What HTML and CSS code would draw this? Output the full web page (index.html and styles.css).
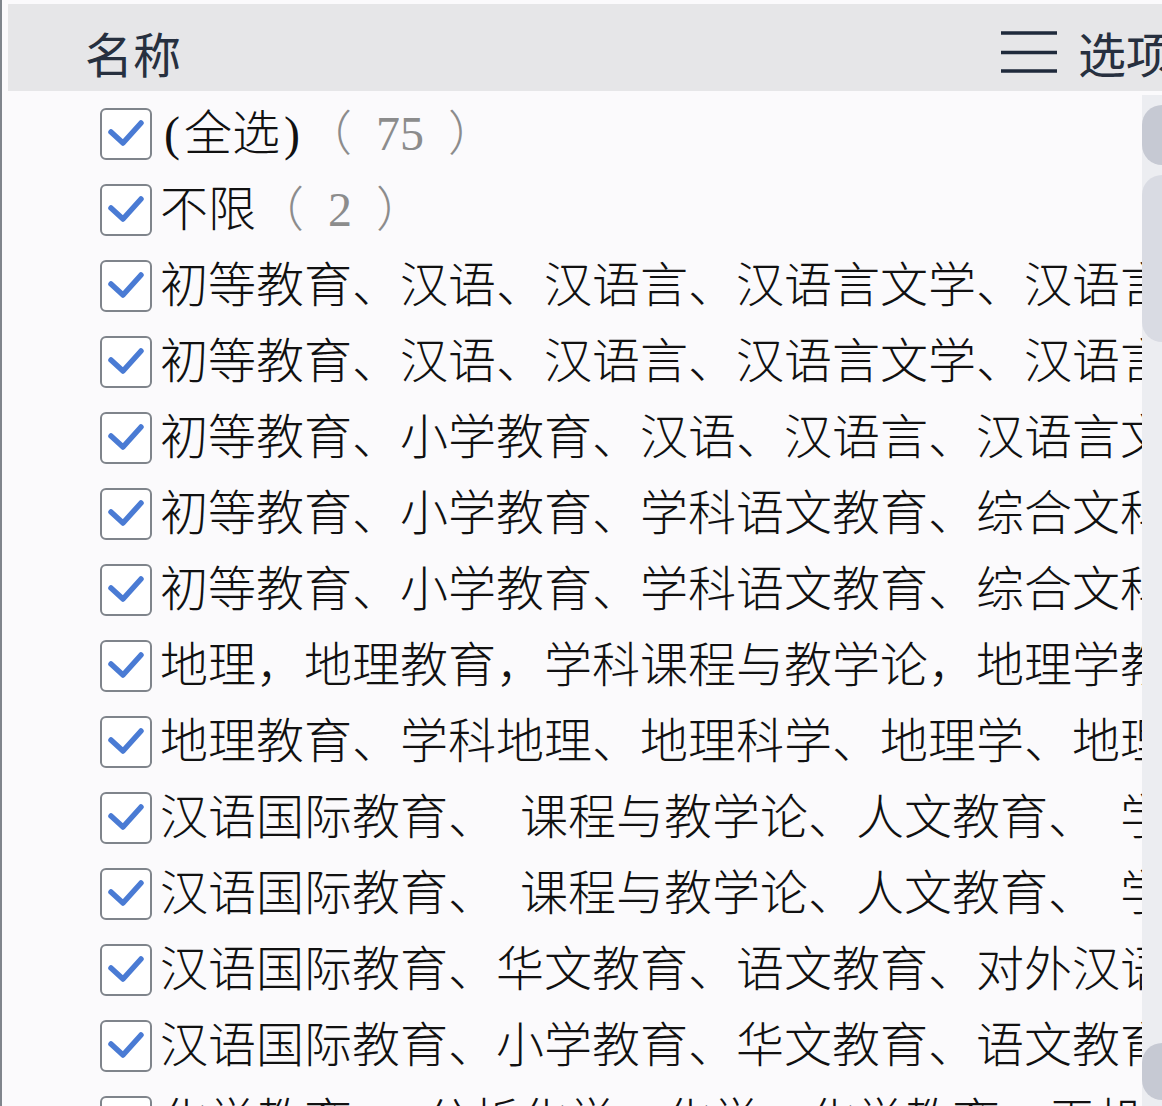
FILE: index.html
```html
<!DOCTYPE html>
<html lang="zh-CN">
<head>
    <meta charset="UTF-8">
    <meta name="viewport" content="width=device-width, initial-scale=1.0">
    <title>筛选 - 名称</title>
    <link rel="stylesheet" href="styles.css">
</head>
<body>
    <div class="filter-panel">
        <div class="panel-head">
            <span class="head-title">名称</span>
            <div class="head-options">
                <svg class="menu-icon" width="56" height="44" viewBox="0 0 56 44">
                    <path d="M0 3H56M0 22.5H56M0 41H56" stroke="#1f2a3b" stroke-width="3.5" fill="none"/>
                </svg>
                <span>选项</span>
            </div>
        </div>

        <div class="panel-body">
            <ul class="item-list">
                <li class="item">
                    <span class="check"><svg width="48" height="48" viewBox="0 0 48 48"><path d="M9 22L21 33L39 13"/></svg></span>
                    <span class="label"><span class="half">(</span>全选<span class="half">)</span><span class="count">（<span class="num">75</span>）</span></span>
                </li>
                <li class="item">
                    <span class="check"><svg width="48" height="48" viewBox="0 0 48 48"><path d="M9 22L21 33L39 13"/></svg></span>
                    <span class="label">不限<span class="count">（<span class="num">2</span>）</span></span>
                </li>
                <li class="item">
                    <span class="check"><svg width="48" height="48" viewBox="0 0 48 48"><path d="M9 22L21 33L39 13"/></svg></span>
                    <span class="label">初等教育、汉语、汉语言、汉语言文学、汉语言文字学</span>
                </li>
                <li class="item">
                    <span class="check"><svg width="48" height="48" viewBox="0 0 48 48"><path d="M9 22L21 33L39 13"/></svg></span>
                    <span class="label">初等教育、汉语、汉语言、汉语言文学、汉语言文学教育</span>
                </li>
                <li class="item">
                    <span class="check"><svg width="48" height="48" viewBox="0 0 48 48"><path d="M9 22L21 33L39 13"/></svg></span>
                    <span class="label">初等教育、小学教育、汉语、汉语言、汉语言文学</span>
                </li>
                <li class="item">
                    <span class="check"><svg width="48" height="48" viewBox="0 0 48 48"><path d="M9 22L21 33L39 13"/></svg></span>
                    <span class="label">初等教育、小学教育、学科语文教育、综合文科教育</span>
                </li>
                <li class="item">
                    <span class="check"><svg width="48" height="48" viewBox="0 0 48 48"><path d="M9 22L21 33L39 13"/></svg></span>
                    <span class="label">初等教育、小学教育、学科语文教育、综合文科</span>
                </li>
                <li class="item">
                    <span class="check"><svg width="48" height="48" viewBox="0 0 48 48"><path d="M9 22L21 33L39 13"/></svg></span>
                    <span class="label">地理，地理教育，学科课程与教学论，地理学教育</span>
                </li>
                <li class="item">
                    <span class="check"><svg width="48" height="48" viewBox="0 0 48 48"><path d="M9 22L21 33L39 13"/></svg></span>
                    <span class="label">地理教育、学科地理、地理科学、地理学、地理信息科学</span>
                </li>
                <li class="item">
                    <span class="check"><svg width="48" height="48" viewBox="0 0 48 48"><path d="M9 22L21 33L39 13"/></svg></span>
                    <span class="label">汉语国际教育、  课程与教学论、人文教育、  学科教学</span>
                </li>
                <li class="item">
                    <span class="check"><svg width="48" height="48" viewBox="0 0 48 48"><path d="M9 22L21 33L39 13"/></svg></span>
                    <span class="label">汉语国际教育、  课程与教学论、人文教育、  学科语文</span>
                </li>
                <li class="item">
                    <span class="check"><svg width="48" height="48" viewBox="0 0 48 48"><path d="M9 22L21 33L39 13"/></svg></span>
                    <span class="label">汉语国际教育、华文教育、语文教育、对外汉语</span>
                </li>
                <li class="item">
                    <span class="check"><svg width="48" height="48" viewBox="0 0 48 48"><path d="M9 22L21 33L39 13"/></svg></span>
                    <span class="label">汉语国际教育、小学教育、华文教育、语文教育</span>
                </li>
                <li class="item">
                    <span class="check"><svg width="48" height="48" viewBox="0 0 48 48"><path d="M9 22L21 33L39 13"/></svg></span>
                    <span class="label">化学教育、  分析化学、化学、化学教育、无机化学</span>
                </li>
            </ul>

            <div class="scrollbar">
                <div class="sb-cap"></div>
                <div class="sb-thumb"></div>
                <div class="sb-cap sb-end"></div>
            </div>
        </div>
    </div>
</body>
</html>
```

FILE: styles.css
```css
html, body {
    height: 100%;
}
body {
    margin: 0;
    background-color: #fbfafc;
    border-left: 2px solid #80858c;
    overflow: hidden;
    font-family: 'Liberation Serif', 'Noto Sans CJK SC', serif;
}

.filter-panel {
    width: 1180px;
    height: 100%;
    padding-top: 4px;
    box-sizing: border-box;
    display: flex;
    flex-direction: column;
}

.panel-head {
    display: flex;
    align-items: center;
    justify-content: space-between;
    height: 87px;
    margin-left: 6px;
    padding: 9px 8px 0 77px;
    box-sizing: border-box;
    background-color: #e6e6e8;
    font-family: 'Noto Sans CJK SC', sans-serif;
    font-size: 48px;
    line-height: 1;
    color: #27303f;
    flex-shrink: 0;
}
.head-options {
    display: flex;
    align-items: center;
    gap: 21px;
}

.panel-body {
    flex: 1;
    display: flex;
    min-height: 0;
}

.item-list {
    flex: 1;
    min-width: 0;
    list-style: none;
    margin: 0;
    padding: 5px 0 0 98px;
    overflow: hidden;
}
.item {
    display: flex;
    align-items: center;
    gap: 8px;
    height: 76px;
}
.check {
    width: 52px;
    height: 52px;
    flex-shrink: 0;
    box-sizing: border-box;
    border: 2px solid #7f848b;
    border-radius: 6px;
    background-color: #fff;
}
.check svg {
    display: block;
}
.check path {
    fill: none;
    stroke: #4a7bd4;
    stroke-width: 5.5;
    stroke-linecap: round;
    stroke-linejoin: round;
}
.label {
    font-size: 48px;
    line-height: 1;
    font-weight: 300;
    color: #111;
    white-space: pre;
}
.half {
    display: inline-block;
    width: 0.5em;
    text-align: center;
}
.count {
    color: #8c8c8c;
}
.num {
    padding: 0 0.5em;
}

.scrollbar {
    width: 40px;
    flex-shrink: 0;
    margin-top: 4px;
    background-color: #ecedf1;
    display: flex;
    flex-direction: column;
    overflow: hidden;
}
.sb-cap {
    height: 60px;
    margin-top: 10px;
    border-radius: 20px;
    background-color: #c6c9d3;
}
.sb-thumb {
    height: 167px;
    margin-top: 10px;
    border-radius: 20px;
    background-color: #d9dbe3;
}
.sb-end {
    height: 57px;
    margin-top: auto;
    margin-bottom: 6px;
}
```
